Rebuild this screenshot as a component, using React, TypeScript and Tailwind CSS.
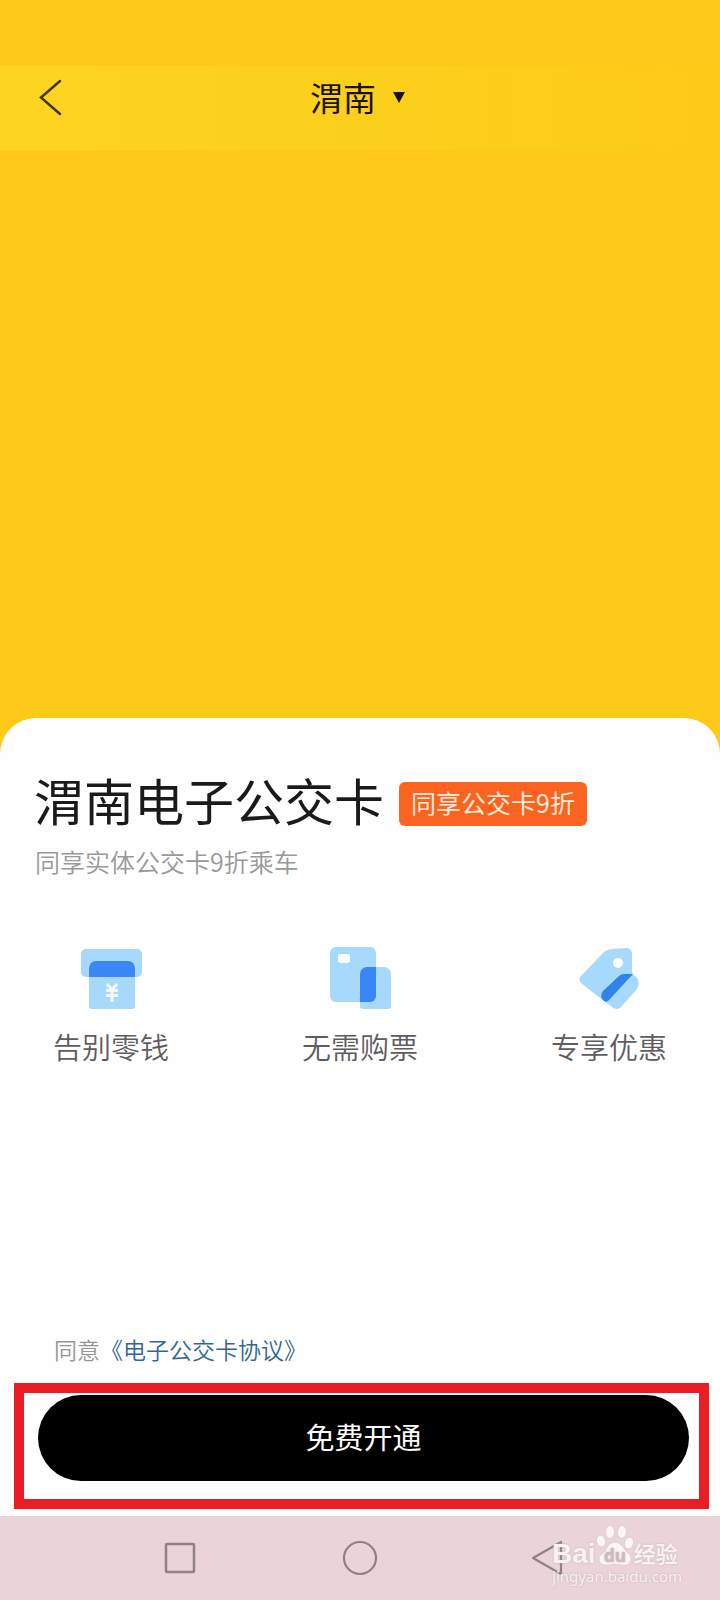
import React from 'react';

type Feature = {
    label: string;
    icon: React.ReactNode;
};

const CashIcon = () => (
    <svg viewBox="0 0 64 64" className="size-16" aria-hidden="true">
        <rect x="2" y="3" width="61" height="28" rx="5" fill="#a6d9fc" />
        <path d="M10 26V22a7 7 0 0 1 7-7H49a7 7 0 0 1 7 7V60a3 3 0 0 1-3 3H13a3 3 0 0 1-3-3Z" fill="#a6d9fc" />
        <path d="M10 31V22a7 7 0 0 1 7-7H49a7 7 0 0 1 7 7V31Z" fill="#3a86f5" />
        <path d="M28 38l5 5.500 5-5.500M33 44V56M27 44.500H39M27 49.500H39" fill="none" stroke="#f4faff" strokeWidth="3" />
    </svg>
);

const TicketIcon = () => (
    <svg viewBox="0 0 64 64" className="size-16" aria-hidden="true">
        <rect x="2" y="1" width="46" height="55" rx="6" fill="#a6d9fc" />
        <path d="M32 28a7 7 0 0 1 7-7H56a7 7 0 0 1 7 7V60a3 3 0 0 1-3 3H35a3 3 0 0 1-3-3Z" fill="#a6d9fc" />
        <path d="M32 28a7 7 0 0 1 7-7H48V50a6 6 0 0 1-6 6H32Z" fill="#3a86f5" />
        <rect x="10" y="8" width="12" height="9" rx="3" fill="#fff" />
    </svg>
);

const TagIcon = () => (
    <svg viewBox="0 0 64 64" className="size-16" aria-hidden="true">
        <path
            d="M27 6Q31 3 35 3L50 2Q55 3 55 8V27L60 32Q63 37 60 43L44 61Q40 65 35 61L27 55L4 37Q1 33 4 30Z"
            fill="#a6d9fc"
        />
        <path d="M56 28H47Q44 28 42 30L26 45Q22 51 27 55Q30 57 33 53Z" fill="#2f83ea" />
        <circle cx="41" cy="17" r="5" fill="#fff" />
    </svg>
);

const features: Feature[] = [
    { label: '告别零钱', icon: <CashIcon /> },
    { label: '无需购票', icon: <TicketIcon /> },
    { label: '专享优惠', icon: <TagIcon /> },
];

const Header = () => (
    <header className="grid grid-cols-[1fr_auto_1fr] items-center h-[84px] mt-[66px] pb-[22px] pl-9 pr-10 bg-linear-to-r from-[#fed422] via-[#fbd01c] to-[#fdca17]">
        <button type="button" aria-label="返回" className="justify-self-start">
            <svg viewBox="0 0 28 40" className="w-7 h-10" fill="none" stroke="#40350b" strokeWidth="2.500" strokeLinecap="round">
                <path d="M24 4L5 20.500L24 37" />
            </svg>
        </button>
        <button type="button" className="flex items-center gap-4 text-[33px] leading-10 text-[#1c1105]">
            渭南
            <svg viewBox="0 0 14 12" className="w-3.5 h-3" fill="#1c1105" aria-hidden="true">
                <path d="M1 1H13L7 12Z" />
            </svg>
        </button>
    </header>
);

const Watermark = () => (
    <div className="absolute right-[38px] top-1 text-[#f9f1f3]">
        <div className="flex items-end h-[46px] [text-shadow:0_0_2px_#bda9ad]">
            <span className="font-['Liberation_Sans',sans-serif] font-bold text-[28px] leading-6">Bai</span>
            <svg viewBox="0 0 38 42" className="w-[38px] h-[42px]" fill="#fbf5f6" stroke="#d8c3c7" strokeWidth="0.700" aria-hidden="true">
                <ellipse cx="5" cy="17" rx="4.500" ry="6" transform="rotate(-12 5 17)" />
                <ellipse cx="14" cy="8" rx="4.500" ry="6.500" />
                <ellipse cx="26" cy="8" rx="4.500" ry="6.500" transform="rotate(8 26 8)" />
                <ellipse cx="33" cy="19" rx="4.500" ry="6" transform="rotate(14 33 19)" />
                <path d="M19 18c6 0 8 6 11 9s6 5 5 9c-1 5-6 6-10 5-4-.8-8-.8-12 0-5 1-10-1-10-6 0-4 4-5 6-8s4-9 10-9Z" />
                <text x="19" y="38" textAnchor="middle" fill="#d0b9be" stroke="none" fontSize="17" fontWeight="700" fontFamily="Open Sans, sans-serif">
                    du
                </text>
            </svg>
            <span className="font-bold text-[22px] leading-7">经验</span>
        </div>
        <div className="font-['Noto_Sans',sans-serif] text-[15px] leading-5 [text-shadow:0_0_2px_#bda9ad]">jingyan.baidu.com</div>
    </div>
);

const NavBar = () => (
    <nav className="relative flex justify-center items-center gap-36 h-[84px] bg-[#ead4d8]">
        <button type="button" aria-label="最近任务">
            <svg viewBox="0 0 36 36" className="size-9" fill="none" stroke="#8f8184" strokeWidth="2.500">
                <rect x="4" y="4" width="28" height="28" rx="1" />
            </svg>
        </button>
        <button type="button" aria-label="主页">
            <svg viewBox="0 0 36 36" className="size-9" fill="none" stroke="#8f8184" strokeWidth="2.200">
                <circle cx="18" cy="18" r="16" />
            </svg>
        </button>
        <button type="button" aria-label="返回上一页">
            <svg viewBox="0 0 36 36" className="size-9 overflow-visible" fill="none" stroke="#8f8184" strokeWidth="2.200" strokeLinejoin="round">
                <path d="M39 2V34L11 18Z" />
            </svg>
        </button>
        <Watermark />
    </nav>
);

const App: React.FC = () => {
    return (
        <div className="flex flex-col min-h-screen bg-[#fec918] font-['Noto_Sans_CJK_SC',sans-serif]">
            <Header />
            <main className="flex flex-col flex-1 mt-[568px] rounded-t-[36px] bg-[#fefefe]">
                <div className="flex items-end gap-[15px] mt-[51px] px-[34px]">
                    <h1 className="text-[50px] leading-[60px] text-[#1a1a1a]">渭南电子公交卡</h1>
                    <span className="h-11 mb-[3px] px-3 rounded-md bg-[#fb6320] text-[25px] leading-10 text-[#ffeadb]">同享公交卡9折</span>
                </div>
                <p className="mt-3.5 px-[35px] text-[25px] leading-9 text-[#999999] font-[350]">同享实体公交卡9折乘车</p>
                <ul className="flex justify-between mt-[67px] px-[53px]">
                    {features.map(feature => (
                        <li key={feature.label} className="flex flex-col items-center gap-4">
                            {feature.icon}
                            <span className="text-[29px] leading-10 text-[#5f5c60] font-[350]">{feature.label}</span>
                        </li>
                    ))}
                </ul>
                <p className="mt-auto px-[54px] pt-10 text-[23px] leading-8 text-[#969696] font-[350]">
                    同意
                    <a href="#agreement" className="text-[#31688e]">《电子公交卡协议》</a>
                </p>
                <div className="mt-[18px] mb-[7px] ml-3.5 mr-[11px] border-[10px] border-[#ea1c24] pt-0.5 pb-[18px] pl-3.5 pr-2.5 bg-white">
                    <button type="button" className="w-full h-[86px] pb-0.5 rounded-full bg-black text-[29px] text-white">
                        免费开通
                    </button>
                </div>
            </main>
            <NavBar />
        </div>
    );
};

export default App;
